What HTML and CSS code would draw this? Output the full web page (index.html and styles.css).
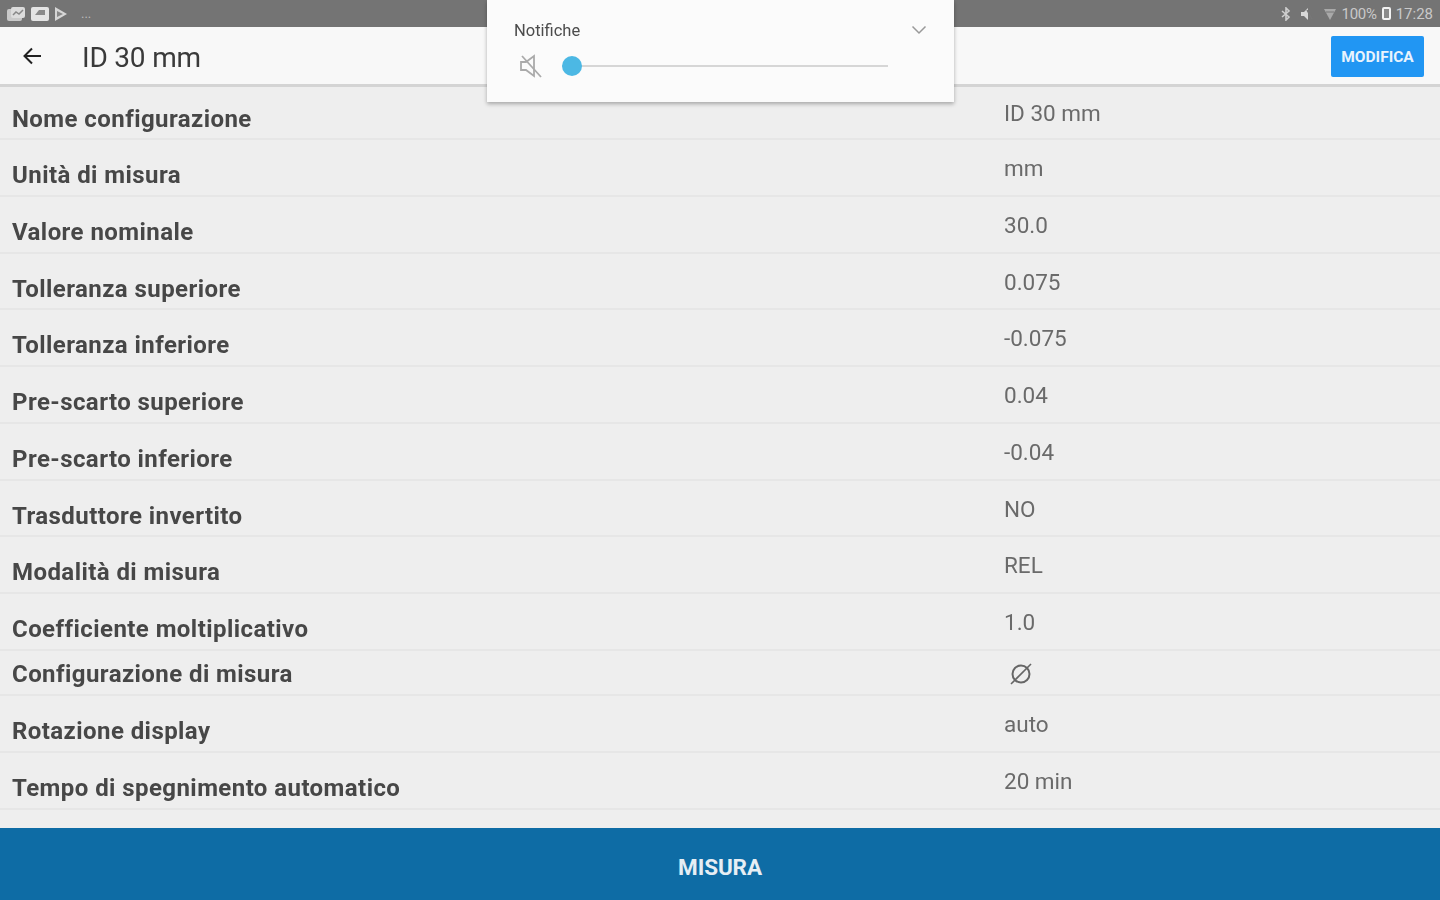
FILE: index.html
```html
<!DOCTYPE html>
<html lang="it">
<head>
<meta charset="utf-8">
<title>ID 30 mm</title>
<link rel="stylesheet" href="styles.css">
</head>
<body>
<div class="app">
  <header class="status">
    <div class="status-left">
      <svg class="si" width="20" height="16" viewBox="0 0 20 16"><rect x="1" y="3" width="15" height="12" rx="2" fill="#c9c9c9"/><rect x="5" y="1" width="14" height="11" rx="2" fill="#dcdcdc"/><path d="M7 9l3-3 3 2 4-4" stroke="#888" stroke-width="1.5" fill="none"/></svg>
      <svg class="si" width="18" height="16" viewBox="0 0 18 16"><rect x="0" y="1" width="18" height="14" rx="2" fill="#e4e4e4"/><path d="M4 9l4-5 6 0v5z" fill="#8a8a8a"/></svg>
      <svg class="si" width="14" height="16" viewBox="0 0 14 16"><path d="M1 1l12 7-12 7z" fill="#d6d6d6"/><path d="M3 5l6 3-6 3z" fill="#888"/></svg>
      <span class="dots">...</span>
    </div>
    <div class="status-right">
      <svg width="10" height="14" viewBox="0 0 10 14"><path d="M1 4l7 6-3 3V1l3 3-7 6" stroke="#cfcfcf" stroke-width="1.6" fill="none"/></svg>
      <svg class="gap-a" width="13" height="14" viewBox="0 0 13 14"><path d="M1 5h3l4-4v12L4 9H1z" fill="#d8d8d8"/><path d="M7 3l5 9" stroke="#777" stroke-width="1.5"/></svg>
      <svg class="gap-b" width="14" height="14" viewBox="0 0 14 14"><path d="M1 2h12L7 13z" fill="#a9a9a9"/><path d="M3 5h8" stroke="#777"/></svg>
      <span class="batt-text">100%</span>
      <span class="batt"></span>
      <span class="clock">17:28</span>
    </div>
  </header>

  <div class="toolbar">
    <svg class="back" width="22" height="22" viewBox="0 0 22 22"><path d="M20 11H4M11 3.500L3.500 11l7.500 7.500" stroke="#222" stroke-width="2" fill="none"/></svg>
    <h1 class="title">ID 30 mm</h1>
    <button class="edit">MODIFICA</button>
  </div>

  <main class="list">
    <div class="row row-first"><span class="label">Nome configurazione</span><span class="value">ID 30 mm</span></div>
    <div class="row"><span class="label">Unità di misura</span><span class="value">mm</span></div>
    <div class="row"><span class="label">Valore nominale</span><span class="value">30.0</span></div>
    <div class="row"><span class="label">Tolleranza superiore</span><span class="value">0.075</span></div>
    <div class="row"><span class="label">Tolleranza inferiore</span><span class="value">-0.075</span></div>
    <div class="row"><span class="label">Pre-scarto superiore</span><span class="value">0.04</span></div>
    <div class="row"><span class="label">Pre-scarto inferiore</span><span class="value">-0.04</span></div>
    <div class="row"><span class="label">Trasduttore invertito</span><span class="value">NO</span></div>
    <div class="row"><span class="label">Modalità di misura</span><span class="value">REL</span></div>
    <div class="row"><span class="label">Coefficiente moltiplicativo</span><span class="value">1.0</span></div>
    <div class="row row-short"><span class="label">Configurazione di misura</span>
      <span class="value"><svg class="dia" width="26" height="26" viewBox="0 0 26 26"><circle cx="13" cy="13" r="8.500" stroke="#666" stroke-width="2" fill="none"/><path d="M3 23L23 3" stroke="#666" stroke-width="1.600"/></svg></span></div>
    <div class="row"><span class="label">Rotazione display</span><span class="value">auto</span></div>
    <div class="row"><span class="label">Tempo di spegnimento automatico</span><span class="value">20 min</span></div>
  </main>

  <button class="measure">MISURA</button>
</div>

<aside class="volume">
  <div class="vol-head">
    <span class="vol-title">Notifiche</span>
    <svg width="16" height="10" viewBox="0 0 16 10"><path d="M1.500 1.500L8 8l6.500-6.500" stroke="#999" stroke-width="1.500" fill="none"/></svg>
  </div>
  <div class="vol-body">
    <svg class="mute" width="24" height="26" viewBox="0 0 24 26"><path d="M2 9h5l8-6v20l-8-6H2z" stroke="#aaa" stroke-width="1.800" fill="none"/><path d="M3 3l19 21" stroke="#aaa" stroke-width="1.800"/></svg>
    <div class="track"><span class="thumb"></span></div>
  </div>
</aside>
</body>
</html>
```

FILE: styles.css
```css
* { box-sizing: border-box; }
html, body { margin: 0; height: 900px; overflow: hidden; }
body { font-family: Roboto, "Liberation Sans", sans-serif; background: #eeeeee; position: relative; }

.app { display: flex; flex-direction: column; height: 900px; filter: blur(0.7px); }

.status {
  height: 27px; flex: none; background: #747474;
  display: flex; justify-content: space-between; align-items: center;
  padding: 0 7px 0 6px;
}
.status-left { display: flex; align-items: center; gap: 5px; }
.dots { color: #bbb; font-size: 13px; margin-left: 8px; line-height: 16px; }
.status-right { display: flex; align-items: center; color: #c9c9c9; font-size: 15px; }
.gap-a { margin-left: 9px; }
.gap-b { margin-left: 10px; }
.batt-text { margin-left: 5px; letter-spacing: -0.3px; }
.batt { width: 9px; height: 13px; margin-left: 5px; border: 2px solid #f2f2f2; border-radius: 2px; background: #8a8a8a; }
.clock { margin-left: 5px; letter-spacing: 0; }

.toolbar {
  height: 60px; flex: none; background: #f8f8f8;
  border-bottom: 3px solid #d4d4d4;
  display: flex; align-items: center;
  padding: 0 16px 0 21px;
}
.back { flex: none; }
.title { margin: 4px 0 0 39px; font-size: 28px; font-weight: 400; color: #3a3a3a; letter-spacing: -0.2px; }
.edit {
  margin-left: auto; width: 93px; height: 41px; border: 0; border-radius: 2px;
  background: #2196f3; color: #e8f3fd; font: 700 15.5px Roboto, sans-serif; padding: 0;
  position: relative; top: 1px;
}

.list { flex: 1; overflow: hidden; }
.row {
  height: 56.75px; display: flex; align-items: flex-start;
  border-bottom: 2px solid #e6e6e6; padding: 0 12px;
}
.row-first { height: 53px; }
.row-short { height: 45.5px; }
.label { flex: none; width: 992px; font-size: 24px; font-weight: 700; color: #474747; line-height: 28px; padding-top: 21px; letter-spacing: 0.43px; }
.value { font-size: 22.5px; color: #6a6a6a; line-height: 26px; padding-top: 15px; }
.row-first .label { padding-top: 18px; }
.row-first .value { padding-top: 13px; }
.row-short .label { padding-top: 9px; }
.row-short .value { padding-top: 10px; }
.dia { display: block; margin-left: 4px; }

.measure {
  height: 72px; flex: none; border: 0; width: 100%; padding: 6px 0 0;
  background: #0e6ca5; color: #e6eef4; font: 700 22.5px Roboto, sans-serif; letter-spacing: -0.1px;
}

.volume {
  position: absolute; left: 487px; top: 0; width: 467px; height: 102px;
  background: #fbfbfb; box-shadow: 0 2px 4px rgba(0,0,0,.3);
  padding: 20px 27px 0;
}
.vol-head { display: flex; justify-content: space-between; align-items: center; height: 20px; color: #4c4c4c; font-size: 16.5px; }
.vol-body { display: flex; align-items: center; margin-top: 13px; }
.mute { margin-left: 5px; flex: none; }
.track { position: relative; margin-left: 19px; width: 326px; height: 2px; background: #d6d6d6; }
.thumb { position: absolute; left: 0; top: -9px; width: 20px; height: 20px; border-radius: 50%; background: #4cb8e4; }
```
